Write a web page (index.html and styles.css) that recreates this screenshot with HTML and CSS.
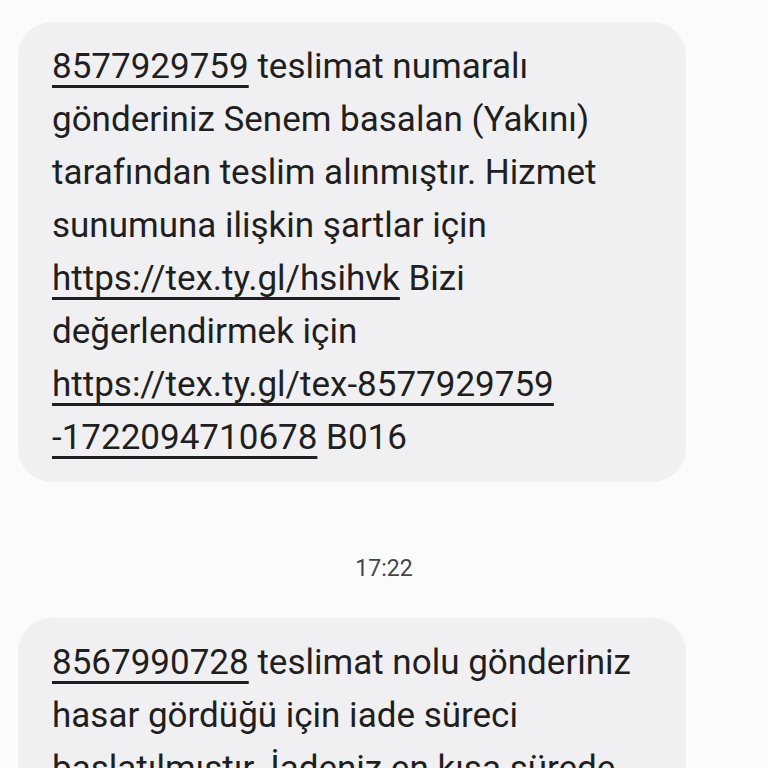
FILE: index.html
```html
<!DOCTYPE html>
<html lang="tr">
<head>
<meta charset="utf-8">
<link rel="stylesheet" href="styles.css">
</head>
<body>
<div class="thread">
  <div class="bubble">
    <p class="msg"><a class="lnk">8577929759</a> teslimat numaralı<br>gönderiniz Senem basalan (Yakını)<br>tarafından teslim alınmıştır. Hizmet<br>sunumuna ilişkin şartlar için<br><a class="lnk">https://tex.ty.gl/hsihvk</a> Bizi<br>değerlendirmek için<br><a class="lnk">https://tex.ty.gl/tex-8577929759<br>-1722094710678</a> B016</p>
  </div>
  <div class="time">17:22</div>
  <div class="bubble">
    <p class="msg"><a class="lnk">8567990728</a> teslimat nolu gönderiniz<br>hasar gördüğü için iade süreci<br>başlatılmıştır. İadeniz en kısa sürede<br>size ulaştırılacaktır.</p>
  </div>
</div>
</body>
</html>
```
FILE: styles.css
```css
html, body {
  margin: 0;
  padding: 0;
  background: #fbfbfd;
}
body {
  width: 768px;
  height: 768px;
  overflow: hidden;
  font-family: Roboto, "Noto Sans", sans-serif;
  color: #1f1f1f;
}
.thread {
  display: flex;
  flex-direction: column;
  padding-top: 22px;
}
.bubble {
  margin-left: 18px;
  width: 668px;
  box-sizing: border-box;
  background: #f0f0f2;
  border-radius: 34px;
  padding: 18px 16px 18px 34px;
}
.msg {
  margin: 0;
  font-size: 35px;
  line-height: 53px;
  letter-spacing: 0;
  white-space: nowrap;
}
.lnk {
  color: #1f1f1f;
  text-decoration: underline;
  text-decoration-thickness: 3px;
  text-underline-offset: 7px;
}
.time {
  height: 136px;
  box-sizing: border-box;
  padding-top: 36px;
  display: flex;
  align-items: center;
  justify-content: center;
  font-size: 23px;
  color: #454547;
}
```
